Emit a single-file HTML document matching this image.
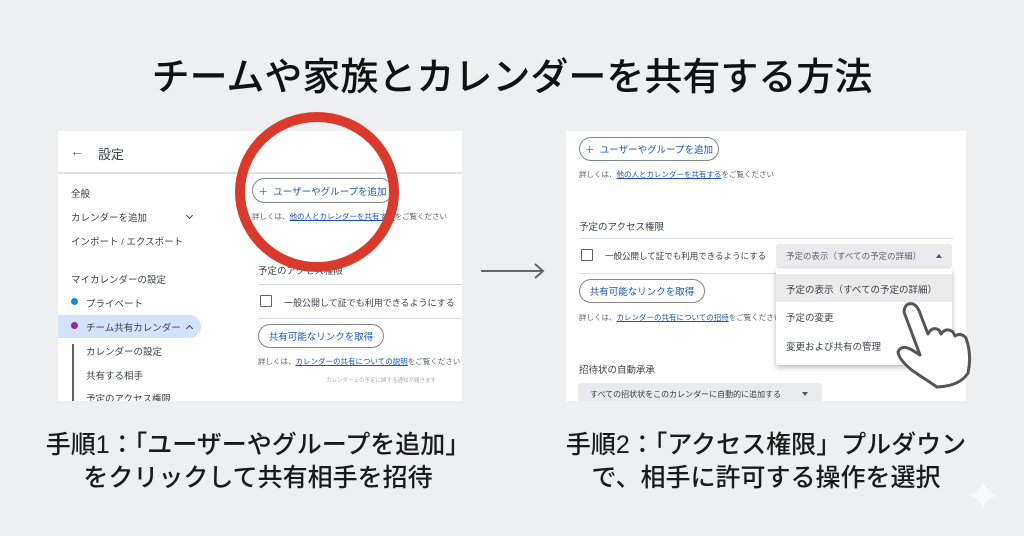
<!DOCTYPE html>
<html><head><meta charset="utf-8"><style>
*{margin:0;padding:0;box-sizing:border-box}
body{width:1024px;height:536px;background:#eeeff0;font-family:"Liberation Sans","Noto Sans CJK JP",sans-serif;position:relative;overflow:hidden;color:#202124}
.a{position:absolute;white-space:nowrap}
.title{left:0;width:1024px;text-align:center;top:46px;font-size:38px;font-weight:500;color:#111}
.panel{position:absolute;background:#fff;overflow:hidden}
.s{font-size:9.5px;color:#3c4043}
.xs{font-size:7.5px;color:#5f6368}
.lk{color:#1a56b0;text-decoration:underline}
.btn{position:absolute;border:1px solid #80868b;border-radius:14px;color:#1a56b0;font-size:9.5px;display:flex;align-items:center;justify-content:center}
.line{position:absolute;height:1px;background:#dadce0}
.cb{position:absolute;width:12px;height:12px;border:1.5px solid #5f6368;border-radius:1px}
.cap{font-size:25px;font-weight:500;color:#1a1a1a;text-align:center}
.chev{position:absolute;width:5px;height:5px;border-right:1.3px solid #444;border-bottom:1.3px solid #444}
</style></head><body>
<div class="a title">チームや家族とカレンダーを共有する方法</div>

<div class="panel" style="left:58px;top:131px;width:404px;height:270px">
  <div class="a" style="left:12px;top:12px;font-size:14px;color:#5f6368">←</div>
  <div class="a" style="left:40px;top:13px;font-size:13px;color:#3c4043">設定</div>
  <div class="line" style="left:0;top:41px;width:404px;background:#e3e3e3;height:2px"></div>
  <div class="a s" style="left:13px;top:55px">全般</div>
  <div class="a s" style="left:13px;top:79px">カレンダーを追加</div>
  <div class="chev" style="left:129px;top:82px;transform:rotate(45deg)"></div>
  <div class="a s" style="left:13px;top:103px">インポート / エクスポート</div>
  <div class="a s" style="left:13px;top:141px">マイカレンダーの設定</div>
  <div class="a" style="left:13px;top:167px;width:7px;height:7px;border-radius:50%;background:#1a88e0"></div>
  <div class="a s" style="left:28px;top:165px">プライベート</div>
  <div class="a" style="left:0;top:184px;width:143px;height:23px;background:#d3e3fd;border-radius:0 12px 12px 0"></div>
  <div class="a" style="left:13px;top:191px;width:7px;height:7px;border-radius:50%;background:#8e24aa"></div>
  <div class="a s" style="left:28px;top:189px">チーム共有カレンダー</div>
  <div class="chev" style="left:129px;top:195px;transform:rotate(-135deg)"></div>
  <div class="a" style="left:14px;top:213px;width:2px;height:60px;background:#5f6368"></div>
  <div class="a s" style="left:28px;top:213px">カレンダーの設定</div>
  <div class="a s" style="left:28px;top:237px">共有する相手</div>
  <div class="a s" style="left:28px;top:260px">予定のアクセス権限</div>
  <div class="btn" style="left:194px;top:47px;width:141px;height:25px">＋&nbsp; ユーザーやグループを追加</div>
  <div class="a xs" style="left:194px;top:80px">詳しくは、<span class="lk">他の人とカレンダーを共有する</span>をご覧ください</div>
  <div class="a s" style="left:200px;top:132px">予定のアクセス権限</div>
  <div class="line" style="left:200px;top:153px;width:210px"></div>
  <div class="cb" style="left:202px;top:164px"></div>
  <div class="a" style="left:226px;top:165px;font-size:9px;color:#3c4043">一般公開して証でも利用できるようにする</div>
  <div class="line" style="left:200px;top:187px;width:210px"></div>
  <div class="btn" style="left:200px;top:193px;width:126px;height:24px">共有可能なリンクを取得</div>
  <div class="a xs" style="left:200px;top:225px">詳しくは、<span class="lk">カレンダーの共有についての説明</span>をご覧ください</div>
  <div class="a" style="left:268px;top:245px;font-size:5.5px;color:#aaa">カレンダー上の予定に関する通知が届きます</div>
</div>
<svg class="a" style="left:0;top:0" width="1024" height="536">
  <ellipse cx="317" cy="192" rx="77" ry="75" fill="none" stroke="#d93a2b" stroke-width="10"/>
  <line x1="481" y1="271" x2="542" y2="271" stroke="#666" stroke-width="2"/>
  <polyline points="535,264 543,271 535,278" fill="none" stroke="#666" stroke-width="2"/>
  <path d="M983 480 Q985 492 998 495 Q985 498 983 510 Q981 498 968 495 Q981 492 983 480Z" fill="#f8f9f9"/>
</svg>

<div class="panel" style="left:566px;top:131px;width:400px;height:270px">
  <div class="btn" style="left:13px;top:6px;width:140px;height:24px">＋&nbsp; ユーザーやグループを追加</div>
  <div class="a xs" style="left:13px;top:38px">詳しくは、<span class="lk">他の人とカレンダーを共有する</span>をご覧ください</div>
  <div class="a s" style="left:13px;top:88px">予定のアクセス権限</div>
  <div class="line" style="left:13px;top:107px;width:374px"></div>
  <div class="cb" style="left:15px;top:118px"></div>
  <div class="a" style="left:39px;top:119px;font-size:8.5px;color:#3c4043">一般公開して証でも利用できるようにする</div>
  <div class="a" style="left:210px;top:113px;width:176px;height:24px;background:#e8eaed;border-radius:3px;font-size:8.5px;color:#5f6368;padding:6px 0 0 10px">予定の表示（すべての予定の詳細）</div>
  <div class="a" style="left:370px;top:123px;width:0;height:0;border-left:3px solid transparent;border-right:3px solid transparent;border-bottom:4px solid #555"></div>
  <div class="line" style="left:13px;top:142px;width:200px"></div>
  <div class="btn" style="left:13px;top:148px;width:126px;height:24px">共有可能なリンクを取得</div>
  <div class="a xs" style="left:13px;top:181px">詳しくは、<span class="lk">カレンダーの共有についての招待</span>をご覧ください</div>
  <div class="a s" style="left:13px;top:231px">招待状の自動承承</div>
  <div class="a" style="left:12px;top:252px;width:244px;height:22px;background:#e8eaed;border-radius:3px;font-size:8px;color:#3c4043;padding:6px 0 0 12px">すべての招状状をこのカレンダーに自動的に追加する</div>
  <div class="a" style="left:236px;top:261px;width:0;height:0;border-left:3px solid transparent;border-right:3px solid transparent;border-top:4px solid #555"></div>
  <div class="a" style="left:210px;top:138px;width:176px;height:96px;background:#fff;box-shadow:0 2px 6px rgba(0,0,0,.3);border-radius:2px">
    <div class="a" style="left:0;top:5px;width:176px;height:28px;background:#ebebeb"></div>
    <div class="a" style="left:10px;top:13px;font-size:9.5px;color:#3c4043">予定の表示（すべての予定の詳細）</div>
    <div class="a" style="left:10px;top:41px;font-size:9.5px;color:#3c4043">予定の変更</div>
    <div class="a" style="left:10px;top:70px;font-size:9.5px;color:#3c4043">変更および共有の管理</div>
  </div>
</div>
<svg class="a" style="left:0;top:0" width="1024" height="536">
  <path d="M904 312 Q905 302 913 304 Q918 306 921 316 L928 334 Q932 326 939 330 L941 334 Q946 327 953 332 L955 336 Q961 332 966 338 Q972 355 968 373 Q960 386 937 387 Q925 379 913 371 Q899 360 898 352 Q901 344 912 350 L920 355 Z" fill="#fff" stroke="#555" stroke-width="3" stroke-linejoin="round"/>
</svg>

<div class="a cap" style="left:18px;width:480px;top:425px">手順1：「ユーザーやグループを追加」</div>
<div class="a cap" style="left:18px;width:480px;top:458px">をクリックして共有相手を招待</div>
<div class="a cap" style="left:526px;width:480px;top:425px">手順2：「アクセス権限」プルダウン</div>
<div class="a cap" style="left:526px;width:480px;top:458px">で、相手に許可する操作を選択</div>
</body></html>
